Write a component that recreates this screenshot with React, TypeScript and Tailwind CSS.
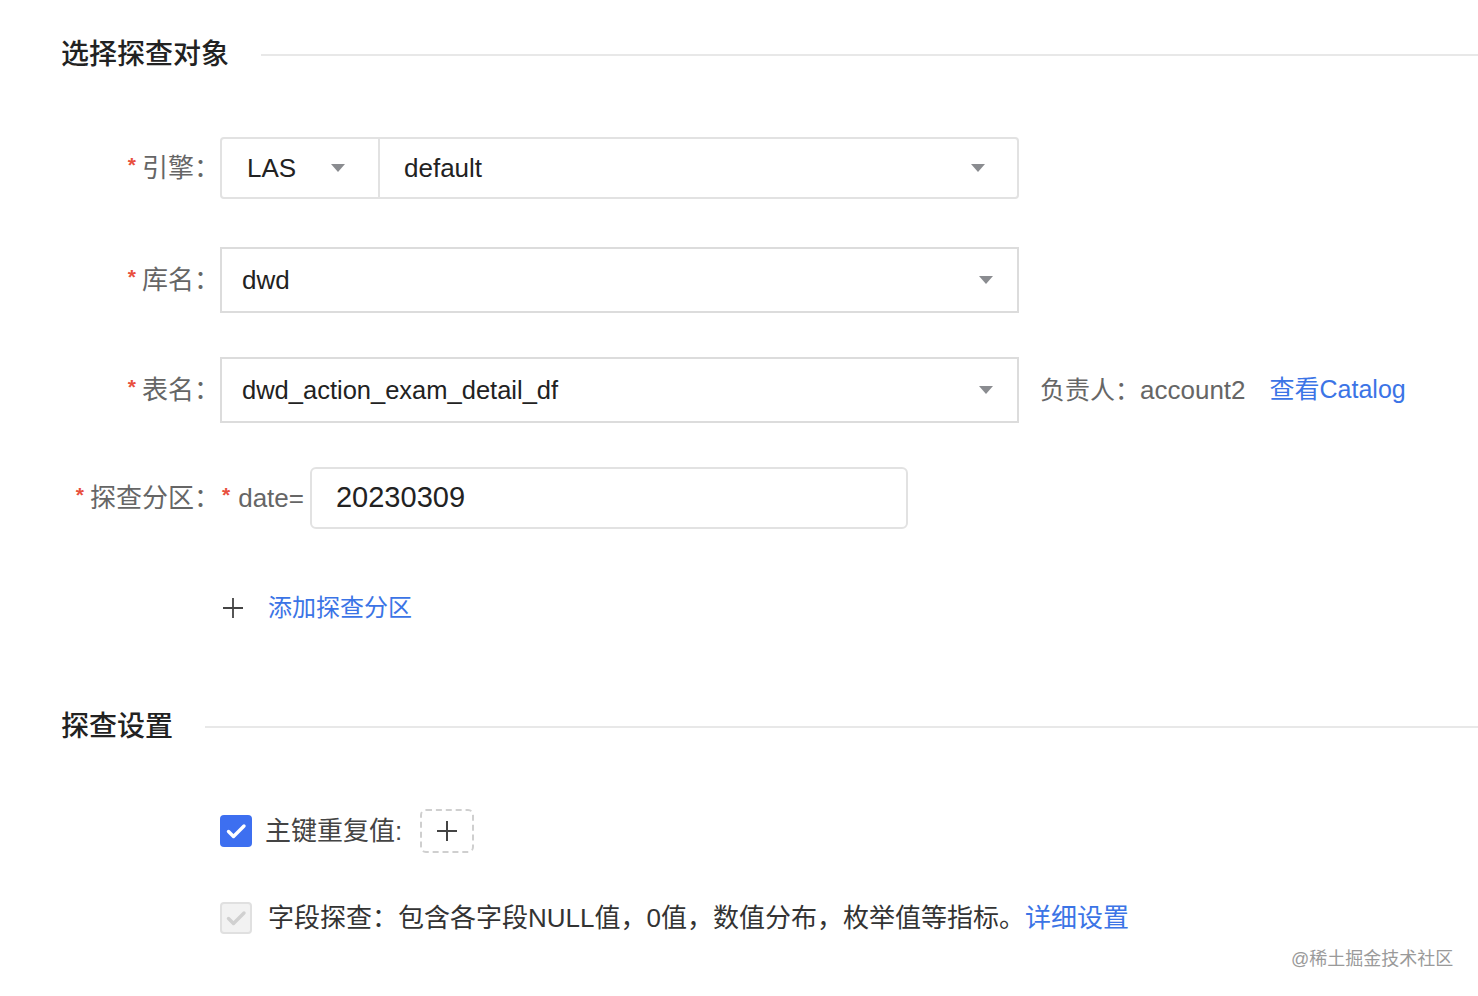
import React from 'react';

const FONT = { fontFamily: '"Liberation Sans", "Noto Sans CJK SC", sans-serif' };

function Caret() {
  return (
    <svg width="16" height="10" viewBox="0 0 16 10" className="shrink-0">
      <path d="M1 1h14L8 9z" fill="#8a8c90" />
    </svg>
  );
}

function Plus({ size = 22, width = 1.8 }: { size?: number; width?: number }) {
  return (
    <svg width={size} height={size} viewBox="0 0 22 22" className="shrink-0">
      <path d="M11 1v20M1 11h20" stroke="#444" strokeWidth={width} />
    </svg>
  );
}

function Check({ color }: { color: string }) {
  return (
    <svg width="24" height="24" viewBox="0 0 24 24">
      <path d="M4.5 12.5l5 5L20 7" fill="none" stroke={color} strokeWidth="3.4" strokeLinecap="round" strokeLinejoin="round" />
    </svg>
  );
}

function Label({ text }: { text: string }) {
  return (
    <div className="w-[159px] shrink-0 flex items-center justify-end text-[26px] text-[#666]">
      <span className="text-[#e8503e] text-[21px] font-bold mr-[6px] -mt-[6px]">*</span>
      {text}
    </div>
  );
}

function SectionTitle({ title }: { title: string }) {
  return (
    <div className="flex items-center h-[40px]">
      <h2 className="text-[28px] font-medium text-[#222] leading-none whitespace-nowrap">{title}</h2>
      <div className="flex-1 h-[2px] bg-[#e8e8e8] ml-[32px]" />
    </div>
  );
}

export default function App() {
  return (
    <div className="relative min-h-[996px] bg-white pl-[61px] pt-[35px]" style={FONT}>
      <SectionTitle title="选择探查对象" />

      {/* 引擎 */}
      <div className="flex mt-[62px] h-[62px]">
        <Label text="引擎：" />
        <div className="flex w-[799px] border-2 border-[#e2e2e2] rounded-[4px]">
          <div className="w-[158px] flex items-center justify-between pl-[25px] pr-[32px] border-r-2 border-[#e2e2e2] text-[26px] text-[#222]">
            <span>LAS</span>
            <Caret />
          </div>
          <div className="flex-1 flex items-center justify-between pl-[24px] pr-[31px] text-[26px] text-[#222]">
            <span>default</span>
            <Caret />
          </div>
        </div>
      </div>

      {/* 库名 */}
      <div className="flex mt-[48px] h-[66px]">
        <Label text="库名：" />
        <div className="w-[799px] flex items-center justify-between pl-[20px] pr-[23px] border-2 border-[#dcdcdc] text-[26px] text-[#222]">
          <span>dwd</span>
          <Caret />
        </div>
      </div>

      {/* 表名 */}
      <div className="flex mt-[44px] h-[66px]">
        <Label text="表名：" />
        <div className="w-[799px] flex items-center justify-between pl-[20px] pr-[23px] border-2 border-[#dcdcdc] text-[25.5px] text-[#222]">
          <span>dwd_action_exam_detail_df</span>
          <Caret />
        </div>
        <div className="flex items-center ml-[21px] text-[25px] whitespace-nowrap">
          <span className="text-[#666]">负责人：<span className="text-[26px]">account2</span></span>
          <span className="ml-[24px] text-[#3b74e6]">查看Catalog</span>
        </div>
      </div>

      {/* 探查分区 */}
      <div className="flex mt-[44px] h-[62px]">
        <Label text="探查分区：" />
        <div className="flex items-center text-[26px] text-[#666]">
          <span className="text-[#e8503e] text-[21px] font-bold ml-[2px] mr-[8px] -mt-[6px]">*</span>
          <span>date=</span>
        </div>
        <div className="ml-[6px] w-[598px] flex items-center pl-[24px] border-2 border-[#e2e2e2] rounded-[6px] text-[29px] text-[#222]">
          20230309
        </div>
      </div>

      {/* 添加探查分区 */}
      <div className="flex items-center mt-[59px] h-[40px] pl-[161px]">
        <Plus />
        <span className="ml-[24px] text-[24px] text-[#3b74e6]">添加探查分区</span>
      </div>

      <div className="mt-[79px]">
        <SectionTitle title="探查设置" />
      </div>

      {/* 主键重复值 */}
      <div className="flex items-center mt-[62px] h-[44px] pl-[159px]">
        <div className="w-[32px] h-[32px] rounded-[4px] bg-[#3d6ff0] flex items-center justify-center">
          <Check color="#ffffff" />
        </div>
        <span className="ml-[13px] text-[26px] text-[#444]">主键重复值:</span>
        <div className="ml-[18px] w-[54px] h-[44px] border-2 border-dashed border-[#cfcfcf] rounded-[6px] flex items-center justify-center">
          <Plus size={22} width={2} />
        </div>
      </div>

      {/* 字段探查 */}
      <div className="flex items-center mt-[45px] h-[40px] pl-[159px]">
        <div className="w-[32px] h-[32px] rounded-[4px] bg-[#f2f2f2] border-2 border-[#e0e0e0] flex items-center justify-center">
          <Check color="#d0d0d0" />
        </div>
        <span className="ml-[16px] text-[26px] text-[#333] whitespace-nowrap">
          字段探查：包含各字段NULL值，0值，数值分布，枚举值等指标。
          <span className="text-[#3b74e6]">详细设置</span>
        </span>
      </div>

      <div className="absolute left-[1291px] top-[946px] text-[18px] text-[#9a9a9a] whitespace-nowrap">
        @稀土掘金技术社区
      </div>
    </div>
  );
}
